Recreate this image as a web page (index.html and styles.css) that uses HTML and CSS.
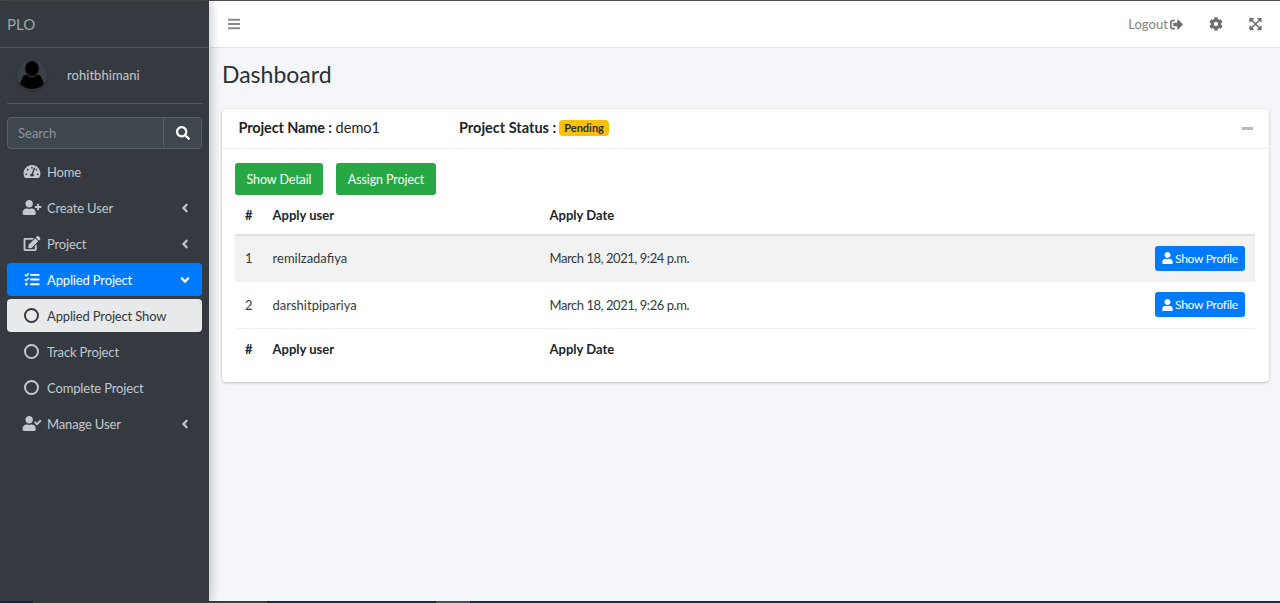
FILE: index.html
```html
<!DOCTYPE html>
<html lang="en">
<head>
<meta charset="utf-8">
<title>PLO Dashboard</title>
<link rel="stylesheet" href="styles.css">
</head>
<body>
<svg class="sprite" aria-hidden="true">
  <symbol id="i-avatar" viewBox="0 0 24 28"><ellipse cx="12" cy="7.6" rx="6.8" ry="7.6"/><path d="M6.6 13.6c1.3 1.6 3.2 2.6 5.4 2.6s4.100-1 5.400-2.600c2.200.6 3.600 1.600 4.300 3.600L24 22.800c-3 3.400-7.400 5.200-12 5.200S3 26.200 0 22.800l2.300-5.600c.7-2 2.100-3 4.300-3.600z"/></symbol>
  <symbol id="i-gauge" viewBox="0 0 576 512"><path d="M288 32C128.94 32 0 160.94 0 320c0 52.8 14.25 102.26 39.06 144.8 5.61 9.62 16.3 15.2 27.44 15.2h443c11.14 0 21.83-5.58 27.44-15.2C561.75 422.26 576 372.8 576 320c0-159.06-128.94-288-288-288zm0 64c14.71 0 26.58 10.13 30.32 23.65-1.11 2.26-2.64 4.23-3.45 6.67l-9.22 27.67c-5.13 3.49-10.97 6.01-17.64 6.01-17.67 0-32-14.33-32-32S270.33 96 288 96zM96 384c-17.67 0-32-14.33-32-32s14.33-32 32-32 32 14.33 32 32-14.33 32-32 32zm48-160c-17.67 0-32-14.33-32-32s14.33-32 32-32 32 14.33 32 32-14.33 32-32 32zm246.77-72.41l-61.33 184C343.13 347.33 352 364.54 352 384c0 11.72-3.38 22.55-8.88 32H232.88c-5.5-9.45-8.88-20.28-8.88-32 0-33.94 26.5-61.43 59.9-63.59l61.34-184.01c4.17-12.56 17.73-19.45 30.36-15.17 12.57 4.19 19.35 17.79 15.17 30.36zm14.66 57.2l15.52-46.55c3.47-1.29 7.13-2.23 11.05-2.23 17.67 0 32 14.33 32 32s-14.33 32-32 32c-11.38-.01-20.89-6.28-26.57-15.22zM480 384c-17.67 0-32-14.33-32-32s14.33-32 32-32 32 14.33 32 32-14.33 32-32 32z"/></symbol>
  <symbol id="i-user-plus" viewBox="0 0 640 512"><path d="M624 208h-64v-64c0-8.8-7.2-16-16-16h-32c-8.8 0-16 7.2-16 16v64h-64c-8.8 0-16 7.2-16 16v32c0 8.8 7.2 16 16 16h64v64c0 8.8 7.2 16 16 16h32c8.8 0 16-7.2 16-16v-64h64c8.8 0 16-7.2 16-16v-32c0-8.8-7.2-16-16-16zm-400 48c70.7 0 128-57.3 128-128S294.7 0 224 0 96 57.3 96 128s57.3 128 128 128zm89.6 32h-16.7c-22.2 10.2-46.9 16-72.9 16s-50.6-5.8-72.9-16h-16.7C60.2 288 0 348.2 0 422.4V464c0 26.5 21.5 48 48 48h352c26.5 0 48-21.5 48-48v-41.6c0-74.2-60.2-134.4-134.4-134.4z"/></symbol>
  <symbol id="i-user" viewBox="0 0 448 512"><path d="M224 256c70.7 0 128-57.3 128-128S294.7 0 224 0 96 57.3 96 128s57.3 128 128 128zm89.6 32h-16.7c-22.2 10.2-46.9 16-72.9 16s-50.6-5.8-72.9-16h-16.7C60.2 288 0 348.2 0 422.4V464c0 26.5 21.5 48 48 48h352c26.5 0 48-21.5 48-48v-41.6c0-74.2-60.2-134.4-134.4-134.4z"/></symbol>
  <symbol id="i-user-check" viewBox="0 0 640 512"><path d="M224 256c70.7 0 128-57.3 128-128S294.7 0 224 0 96 57.3 96 128s57.3 128 128 128zm89.6 32h-16.7c-22.2 10.2-46.9 16-72.9 16s-50.6-5.8-72.9-16h-16.7C60.2 288 0 348.2 0 422.4V464c0 26.5 21.5 48 48 48h352c26.5 0 48-21.5 48-48v-41.6c0-74.2-60.2-134.4-134.4-134.4zm323-128.4l-27.8-28.1c-4.6-4.7-12.1-4.7-16.8-.1l-104.8 104-45.5-45.8c-4.6-4.7-12.1-4.7-16.8-.1l-28.1 27.9c-4.7 4.6-4.7 12.1-.1 16.8l81.7 82.3c4.6 4.7 12.1 4.7 16.8.1l141.3-140.2c4.6-4.7 4.7-12.2.1-16.8z"/></symbol>
  <symbol id="i-edit" viewBox="0 0 576 512"><path d="M402.6 83.2l90.2 90.2c3.8 3.8 3.8 10 0 13.8L274.4 405.6l-92.8 10.3c-12.4 1.4-22.9-9.1-21.5-21.5l10.3-92.8L388.8 83.2c3.8-3.8 10-3.8 13.8 0zm162-22.9l-48.8-48.8c-15.2-15.2-39.9-15.2-55.2 0l-35.4 35.4c-3.8 3.8-3.8 10 0 13.8l90.2 90.2c3.8 3.8 10 3.8 13.8 0l35.4-35.4c15.2-15.3 15.2-40 0-55.2zM384 346.2V448H64V128h229.8c3.2 0 6.2-1.3 8.5-3.5l40-40c7.6-7.6 2.2-20.5-8.5-20.5H48C21.5 64 0 85.5 0 112v352c0 26.5 21.5 48 48 48h352c26.5 0 48-21.5 48-48V306.2c0-10.7-12.9-16-20.5-8.5l-40 40c-2.2 2.3-3.5 5.3-3.5 8.5z"/></symbol>
  <symbol id="i-tasks" viewBox="0 0 512 512"><path d="M139.61 35.5a12 12 0 0 0-17 0L58.93 98.81l-22.7-22.12a12 12 0 0 0-17 0L3.53 92.41a12 12 0 0 0 0 17l47.59 47.4a12.78 12.78 0 0 0 17.61 0l15.59-15.62L156.52 69a12.09 12.09 0 0 0 .09-17zm0 159.19a12 12 0 0 0-17 0l-63.68 63.72-22.7-22.1a12 12 0 0 0-17 0L3.53 252a12 12 0 0 0 0 17L51 316.5a12.77 12.77 0 0 0 17.6 0l15.7-15.69 72.2-72.22a12 12 0 0 0 .09-16.9zM64 368c-26.49 0-48.59 21.5-48.59 48S37.53 464 64 464a48 48 0 0 0 0-96zm432 16H208a16 16 0 0 0-16 16v32a16 16 0 0 0 16 16h288a16 16 0 0 0 16-16v-32a16 16 0 0 0-16-16zm0-320H208a16 16 0 0 0-16 16v32a16 16 0 0 0 16 16h288a16 16 0 0 0 16-16V80a16 16 0 0 0-16-16zm0 160H208a16 16 0 0 0-16 16v32a16 16 0 0 0 16 16h288a16 16 0 0 0 16-16v-32a16 16 0 0 0-16-16z"/></symbol>
  <symbol id="i-search" viewBox="0 0 512 512"><path d="M505 442.7L405.3 343c-4.5-4.5-10.6-7-17-7H372c27.6-35.3 44-79.7 44-128C416 93.1 322.9 0 208 0S0 93.1 0 208s93.1 208 208 208c48.3 0 92.7-16.4 128-44v16.3c0 6.4 2.5 12.5 7 17l99.7 99.7c9.4 9.4 24.6 9.4 33.9 0l28.3-28.3c9.4-9.4 9.4-24.6.1-34zM208 336c-70.7 0-128-57.2-128-128 0-70.7 57.2-128 128-128 70.7 0 128 57.2 128 128 0 70.7-57.2 128-128 128z"/></symbol>
  <symbol id="i-bars" viewBox="0 0 448 512"><path d="M16 132h416c8.837 0 16-7.163 16-16V76c0-8.837-7.163-16-16-16H16C7.163 60 0 67.163 0 76v40c0 8.837 7.163 16 16 16zm0 160h416c8.837 0 16-7.163 16-16v-40c0-8.837-7.163-16-16-16H16c-8.837 0-16 7.163-16 16v40c0 8.837 7.163 16 16 16zm0 160h416c8.837 0 16-7.163 16-16v-40c0-8.837-7.163-16-16-16H16c-8.837 0-16 7.163-16 16v40c0 8.837 7.163 16 16 16z"/></symbol>
  <symbol id="i-signout" viewBox="0 0 512 512"><path d="M497 273L329 441c-15 15-41 4.5-41-17v-96H152c-13.3 0-24-10.7-24-24v-96c0-13.3 10.7-24 24-24h136V88c0-21.4 25.9-32 41-17l168 168c9.3 9.4 9.3 24.6 0 34zM192 436v-40c0-6.6-5.4-12-12-12H96c-17.7 0-32-14.3-32-32V160c0-17.7 14.3-32 32-32h84c6.6 0 12-5.4 12-12V76c0-6.6-5.4-12-12-12H96c-53 0-96 43-96 96v192c0 53 43 96 96 96h84c6.6 0 12-5.4 12-12z"/></symbol>
  <symbol id="i-cog" viewBox="0 0 512 512"><path d="M487.4 315.7l-42.6-24.6c4.3-23.2 4.3-47 0-70.2l42.6-24.6c4.9-2.8 7.1-8.6 5.5-14-11.1-35.6-30-67.8-54.7-94.6-3.8-4.1-10-5.1-14.8-2.3L380.8 110c-17.9-15.4-38.5-27.3-60.8-35.1V25.8c0-5.6-3.9-10.5-9.4-11.7-36.7-8.2-74.3-7.8-109.2 0-5.5 1.2-9.4 6.1-9.4 11.7V75c-22.2 7.9-42.8 19.8-60.8 35.1L88.7 85.5c-4.9-2.8-11-1.9-14.8 2.3-24.7 26.7-43.6 58.9-54.7 94.6-1.7 5.4.6 11.2 5.5 14L67.3 221c-4.3 23.2-4.3 47 0 70.2l-42.6 24.6c-4.9 2.8-7.1 8.6-5.5 14 11.1 35.6 30 67.8 54.7 94.6 3.8 4.1 10 5.1 14.8 2.3l42.6-24.6c17.9 15.4 38.5 27.3 60.8 35.1v49.2c0 5.6 3.9 10.5 9.4 11.7 36.7 8.2 74.3 7.8 109.2 0 5.5-1.2 9.4-6.1 9.4-11.7v-49.2c22.2-7.9 42.8-19.8 60.8-35.1l42.6 24.6c4.9 2.8 11 1.9 14.8-2.3 24.7-26.7 43.6-58.9 54.7-94.6 1.5-5.5-.7-11.3-5.6-14.1zM256 336c-44.1 0-80-35.9-80-80s35.9-80 80-80 80 35.9 80 80-35.9 80-80 80z"/></symbol>
  <symbol id="i-expand" viewBox="0 0 448 512"><path d="M448 344v112a23.94 23.94 0 0 1-24 24H312c-21.39 0-32.09-25.9-17-41l36.2-36.2L224 295.6 116.77 402.9 153 439c15.09 15.1 4.39 41-17 41H24a23.94 23.94 0 0 1-24-24V344c0-21.4 25.89-32.1 41-17l36.19 36.2L184.46 256 77.18 148.7 41 185c-15.1 15.1-41 4.4-41-17V56a23.94 23.94 0 0 1 24-24h112c21.39 0 32.09 25.9 17 41l-36.2 36.2L224 216.4l107.23-107.3L295 73c-15.09-15.1-4.39-41 17-41h112a23.94 23.94 0 0 1 24 24v112c0 21.4-25.89 32.1-41 17l-36.19-36.2L263.54 256l107.28 107.3L407 327.1c15.1-15.2 41-4.5 41 16.9z"/></symbol>
  <symbol id="i-left" viewBox="0 0 256 512"><path d="M31.7 239l136-136c9.4-9.4 24.6-9.4 33.9 0l22.6 22.6c9.4 9.4 9.4 24.6 0 33.9L127.9 256l96.4 96.4c9.4 9.4 9.4 24.6 0 33.9L201.7 409c-9.4 9.4-24.6 9.4-33.9 0l-136-136c-9.5-9.4-9.5-24.6-.1-34z"/></symbol>
  <symbol id="i-down" viewBox="0 0 320 512"><path d="M143 352.3L7 216.3c-9.4-9.4-9.4-24.6 0-33.9l22.6-22.6c9.4-9.4 24.6-9.4 33.9 0l96.4 96.4 96.4-96.4c9.4-9.4 24.6-9.4 33.9 0l22.6 22.6c9.4 9.4 9.4 24.6 0 33.9l-136 136c-9.2 9.4-24.4 9.4-33.8 0z"/></symbol>
</svg>

<div class="topstrip"></div>
<div class="app">
  <aside class="sidebar">
    <div class="brand">PLO</div>
    <div class="panel">
      <div class="user">
        <span class="avatar"><svg class="avatar-ico"><use href="#i-avatar"/></svg></span>
        <span class="username">rohitbhimani</span>
      </div>
      <div class="search">
        <span class="search-text">Search</span>
        <span class="search-btn"><svg class="ico-search"><use href="#i-search"/></svg></span>
      </div>
      <nav class="nav">
        <a class="item"><span class="ic"><svg class="ico-nav"><use href="#i-gauge"/></svg></span>Home</a>
        <a class="item"><span class="ic"><svg class="ico-nav"><use href="#i-user-plus"/></svg></span>Create User<svg class="caret"><use href="#i-left"/></svg></a>
        <a class="item"><span class="ic"><svg class="ico-nav"><use href="#i-edit"/></svg></span>Project<svg class="caret"><use href="#i-left"/></svg></a>
        <a class="item active"><span class="ic"><svg class="ico-nav"><use href="#i-tasks"/></svg></span>Applied Project<svg class="caret-down"><use href="#i-down"/></svg></a>
        <a class="item current"><span class="ic"><i class="ring"></i></span>Applied Project Show</a>
        <a class="item"><span class="ic"><i class="ring"></i></span>Track Project</a>
        <a class="item"><span class="ic"><i class="ring"></i></span>Complete Project</a>
        <a class="item"><span class="ic"><svg class="ico-nav"><use href="#i-user-check"/></svg></span>Manage User<svg class="caret"><use href="#i-left"/></svg></a>
      </nav>
    </div>
  </aside>

  <div class="main">
    <header class="navbar">
      <svg class="ico-bars"><use href="#i-bars"/></svg>
      <div class="nav-right">
        <span class="logout">Logout<svg class="ico-top ico-logout"><use href="#i-signout"/></svg></span>
        <svg class="ico-top"><use href="#i-cog"/></svg>
        <svg class="ico-top ico-expand"><use href="#i-expand"/></svg>
      </div>
    </header>
    <main class="content">
      <h1 class="title">Dashboard</h1>
      <section class="card">
        <div class="card-head">
          <div class="head-name"><b class="tight">Project Name :</b> demo1</div>
          <div class="head-status"><b>Project Status :</b> <span class="badge">Pending</span></div>
          <i class="minus"></i>
        </div>
        <div class="card-body">
          <div class="actions">
            <a class="btn green">Show Detail</a>
            <a class="btn green">Assign Project</a>
          </div>
          <table class="table">
            <thead>
              <tr><th class="c1">#</th><th class="c2">Apply user</th><th>Apply Date</th><th></th></tr>
            </thead>
            <tbody>
              <tr class="odd"><td>1</td><td>remilzadafiya</td><td class="date">March 18, 2021, 9:24 p.m.</td><td class="r"><a class="btn blue"><svg class="ico-btn"><use href="#i-user"/></svg>Show Profile</a></td></tr>
              <tr class="even"><td>2</td><td>darshitpipariya</td><td class="date">March 18, 2021, 9:26 p.m.</td><td class="r"><a class="btn blue"><svg class="ico-btn"><use href="#i-user"/></svg>Show Profile</a></td></tr>
            </tbody>
            <tfoot>
              <tr><th>#</th><th>Apply user</th><th>Apply Date</th><th></th></tr>
            </tfoot>
          </table>
        </div>
      </section>
    </main>
  </div>
</div>
<div class="bottomstrip"></div>
</body>
</html>
```
FILE: styles.css
```css
* { box-sizing: border-box; }
html, body { margin: 0; height: 603px; overflow: hidden; }
body {
  display: flex;
  flex-direction: column;
  font-family: "Lato", "Liberation Sans", sans-serif;
  font-size: 13px;
  color: #212529;
  background: #f4f6f9;
}
.sprite { display: none; }
svg { fill: currentColor; display: block; flex: none; }
.topstrip { height: 1px; background: #4a4d50; flex: none; }
.bottomstrip {
  height: 2px;
  flex: none;
  background: linear-gradient(to right, #1b2a35 33px, #3c4044 33px, #3c4044 267px, #1b2a35 267px, #1b2a35 436px, #46505a 436px, #46505a 470px, #1b2a35 470px);
}
.app { flex: 1; display: flex; min-height: 0; }

.sidebar {
  width: 209px;
  flex: none;
  background: #343a40;
  color: #c2c7d0;
  box-shadow: 2px 0 10px rgba(0,0,0,.22);
  position: relative;
}
.brand {
  height: 47px;
  padding: 14px 0 0 7px;
  font-size: 15px;
  line-height: 18px;
  color: #9ea3a8;
  border-bottom: 1px solid #4b545c;
}
.panel { padding: 0 7px; }
.user {
  height: 56px;
  display: flex;
  align-items: center;
  padding-bottom: 2px;
  border-bottom: 1px solid #4f5962;
}
.avatar {
  width: 30px; height: 30px;
  margin-left: 10px;
  border-radius: 50%;
  background: #3a4047;
  box-shadow: 0 1px 3px rgba(0,0,0,.25);
  display: flex;
  justify-content: center;
  align-items: center;
  color: #000;
}
.avatar-ico { width: 24px; height: 28px; }
.username { margin-left: 20px; color: #c2c7d0; letter-spacing: .05px; }
.search {
  margin-top: 13px;
  height: 32px;
  display: flex;
  background: #3f474e;
  border: 1px solid #56606a;
  border-radius: 4px;
}
.search-text { flex: 1; padding: 7px 0 0 10px; color: #8d949a; line-height: 16px; }
.search-btn {
  width: 38px;
  display: flex;
  justify-content: center;
  align-items: center;
  border-left: 1px solid #56606a;
  color: #fff;
}
.ico-search { width: 14px; height: 14px; }
.nav { display: flex; flex-direction: column; gap: 3px; margin-top: 6px; }
.item {
  height: 33px;
  display: flex;
  align-items: center;
  border-radius: 4px;
  color: #c2c7d0;
  padding-right: 12px;
  letter-spacing: -.15px;
}
.ic { width: 40px; display: flex; justify-content: center; flex: none; padding-left: 9px; }
.ico-nav { width: 20px; height: 15px; }
.caret { width: 8px; height: 14px; margin-left: auto; margin-right: 1px; }
.caret-down { width: 10px; height: 14px; margin-left: auto; }
.active { background: #007bff; color: #fff; }
.current { background: #e8e9ea; color: #343a40; }
.ring {
  width: 15px; height: 15px;
  border: 2px solid currentColor;
  border-radius: 50%;
  display: block;
}

.main { flex: 1; min-width: 0; display: flex; flex-direction: column; }
.navbar {
  height: 47px;
  flex: none;
  background: #fff;
  border-bottom: 1px solid #dee2e6;
  display: flex;
  align-items: center;
  padding: 0 18px 0 19px;
  color: #6c757d;
}
.ico-bars { width: 12px; height: 14px; color: #85898e; margin-bottom: 1px; }
.nav-right { margin-left: auto; display: flex; align-items: center; gap: 26px; }
.logout { display: flex; align-items: center; gap: 2px; color: #7d8389; letter-spacing: .05px; }
.ico-top { width: 14px; height: 14px; color: #6c6f72; }
.ico-logout { width: 13px; height: 13px; }
.ico-expand { width: 13px; height: 14px; }
.content { padding: 0 11px 0 13px; }
.title {
  margin: 0;
  height: 61px;
  padding-top: 12px;
  font-size: 23px;
  line-height: 29px;
  font-weight: 400;
  color: #2b3035;
}
.card {
  background: #fff;
  border-radius: 4px;
  box-shadow: 0 0 1px rgba(0,0,0,.13), 0 1px 3px rgba(0,0,0,.2);
  height: 273px;
}
.card-head {
  height: 40px;
  border-bottom: 1px solid #eceef0;
  display: flex;
  align-items: center;
  padding: 0 16px 2px 17px;
  font-size: 14.5px;
}
.head-name { width: 220px; margin-left: -.5px; }
.tight { letter-spacing: -.13px; }
.head-status { display: flex; align-items: center; gap: 3px; margin-left: .5px; }
.badge {
  background: #ffc107;
  color: #1f2d3d;
  border-radius: 4px;
  font-size: 11px;
  font-weight: 700;
  line-height: 16px;
  padding: 0 5px;
  margin-top: 1px;
}
.minus { margin-left: auto; width: 11px; height: 3px; background: #b5bac0; display: block; margin-top: 2px; }
.card-body { padding: 14px 14px 0 13px; }
.actions { display: flex; gap: 13px; }
.btn {
  display: inline-flex;
  align-items: center;
  justify-content: center;
  border-radius: 3px;
  color: #fff;
}
.green { background: #28a745; height: 32px; width: 88px; font-size: 12.5px; letter-spacing: -.1px; }
.green + .green { width: 100px; }
.blue { background: #007bff; height: 25px; width: 90px; font-size: 12px; gap: 2px; letter-spacing: -.28px; }
.ico-btn { width: 11px; height: 12px; }
.table { width: 100%; border-collapse: collapse; color: #343a40; }
.table th { text-align: left; font-weight: 700; color: #212529; padding: 0 10px; }
.table td { padding: 0 10px; }
.table .c1 { width: 27px; }
.table .c2 { width: 277px; }
.table .date { letter-spacing: -.45px; }
.table thead tr { height: 40px; }
.table thead th { border-bottom: 2px solid #dee2e6; padding-top: 1px; }
.table tbody tr { height: 46px; border-bottom: 1px solid #eceef0; }
.table tfoot tr { height: 42px; }
.table .odd { height: 47px; background: #f2f2f2; border-bottom: 0; }
.table .odd td { padding-bottom: 2px; }
.table .r { text-align: right; }
```
